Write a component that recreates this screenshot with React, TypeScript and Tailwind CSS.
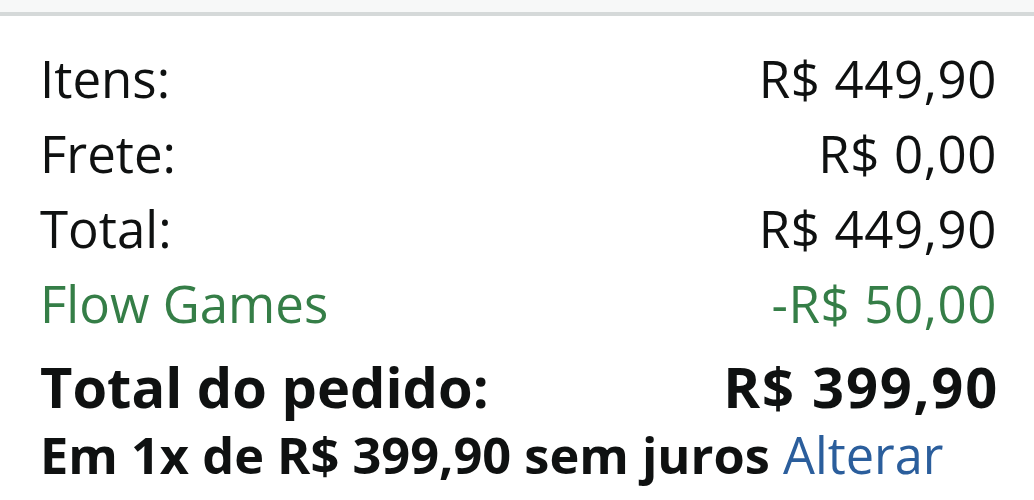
const rows = [
  { label: 'Itens:', value: 'R$ 449,90', tone: 'text-[#0f1111]' },
  { label: 'Frete:', value: 'R$ 0,00', tone: 'text-[#0f1111]' },
  { label: 'Total:', value: 'R$ 449,90', tone: 'text-[#0f1111]' },
  { label: 'Flow Games', value: '-R$ 50,00', tone: 'text-[#357e47]' },
];

export default function App() {
  return (
    <div className="w-[1034px] h-[500px] bg-white overflow-hidden font-['Open_Sans',sans-serif]">
      <div className="h-3 bg-[#f7f8f8]" />
      <div className="h-1 bg-[#d5d9d9]" />
      <div className="pl-10 pr-[37px] pt-[25px] text-[#0f1111]">
        {rows.map((row) => (
          <div key={row.label} className={`flex justify-between text-[51px] leading-[75px] ${row.tone}`}>
            <span>{row.label}</span>
            <span className="tracking-[0.6px]">{row.value}</span>
          </div>
        ))}
        <div className="flex justify-between text-[56px] leading-[78px] font-bold mt-[6px]">
          <span>Total do pedido:</span>
          <span className="tracking-[1.8px] -mr-[2px]">R$ 399,90</span>
        </div>
        <div className="text-[50.5px] leading-[60px] font-bold">
          Em 1x de R$ 399,90 sem juros <span className="font-normal text-[#2b5e9c]">Alterar</span>
        </div>
      </div>
    </div>
  );
}
